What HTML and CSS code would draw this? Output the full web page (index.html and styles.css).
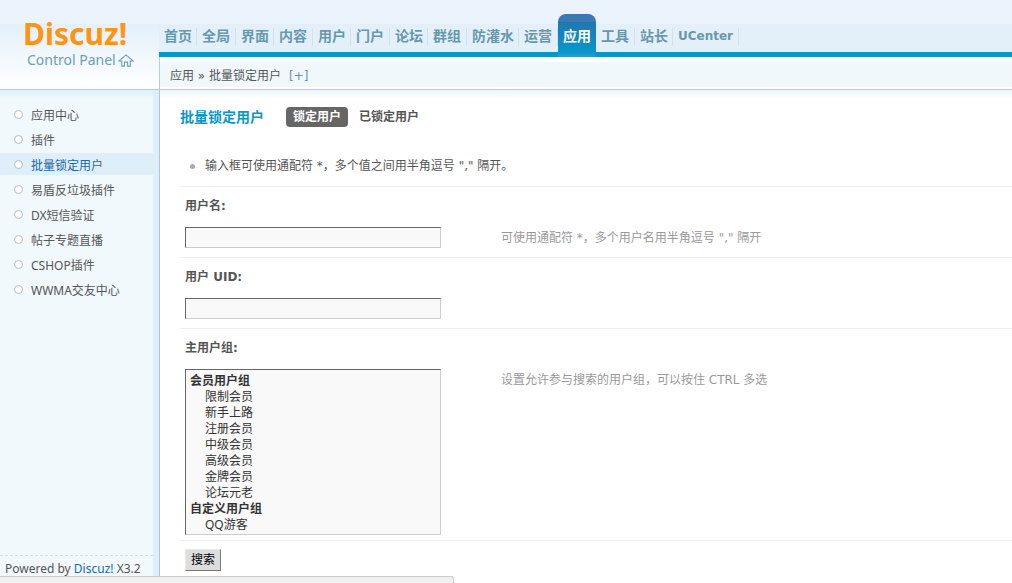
FILE: index.html
```html
<!DOCTYPE html>
<html lang="zh-CN">
<head>
<meta charset="utf-8">
<meta name="viewport" content="width=device-width, initial-scale=1">
<title>Discuz! Control Panel</title>
<link rel="stylesheet" href="styles.css">
</head>
<body>
<div class="page">
  <header class="header">
    <div class="brand">
      <div class="logo">Discuz!</div>
      <a class="home" href="#">Control Panel<svg class="home-icon" viewBox="0 0 15 12" aria-hidden="true"><path d="M.8 6.500 7.500.8 14.200 6.500H11.500V11.300H9V7.500H6V11.300H3.500V6.500Z"/></svg></a>
    </div>
    <div class="top">
      <nav class="nav">
        <a href="#">首页</a><a href="#">全局</a><a href="#">界面</a><a href="#">内容</a><a href="#">用户</a><a href="#">门户</a><a href="#">论坛</a><a href="#">群组</a><a href="#">防灌水</a><a href="#">运营</a><a class="current" href="#">应用</a><a href="#">工具</a><a href="#">站长</a><a class="latin" href="#">UCenter</a>
      </nav>
      <div class="crumbs"><span>应用 » 批量锁定用户</span><a href="#">[+]</a></div>
    </div>
  </header>
  <aside class="side">
    <ul class="menu">
      <li><a href="#">应用中心</a></li>
      <li><a href="#">插件</a></li>
      <li class="on"><a href="#">批量锁定用户</a></li>
      <li><a href="#">易盾反垃圾插件</a></li>
      <li><a href="#">DX短信验证</a></li>
      <li><a href="#">帖子专题直播</a></li>
      <li><a href="#">CSHOP插件</a></li>
      <li><a href="#">WWMA交友中心</a></li>
    </ul>
    <p class="powered">Powered by <a href="#">Discuz!</a> X3.2</p>
  </aside>
  <main class="main">
    <div class="title">
      <h1>批量锁定用户</h1>
      <a class="tab active" href="#">锁定用户</a>
      <a class="tab" href="#">已锁定用户</a>
    </div>
    <ul class="tips"><li>输入框可使用通配符 *，多个值之间用半角逗号 "," 隔开。</li></ul>
    <form class="form">
      <div class="row">
        <label for="username">用户名:</label>
        <div class="field"><input id="username" class="text" type="text"><p class="hint">可使用通配符 *，多个用户名用半角逗号 "," 隔开</p></div>
      </div>
      <div class="row">
        <label for="uid">用户 UID:</label>
        <div class="field"><input id="uid" class="text" type="text"></div>
      </div>
      <div class="row">
        <label for="groups">主用户组:</label>
        <div class="field">
          <select id="groups" class="list" multiple size="10">
            <optgroup label="会员用户组">
              <option>限制会员</option>
              <option>新手上路</option>
              <option>注册会员</option>
              <option>中级会员</option>
              <option>高级会员</option>
              <option>金牌会员</option>
              <option>论坛元老</option>
            </optgroup>
            <optgroup label="自定义用户组">
              <option>QQ游客</option>
            </optgroup>
          </select>
          <p class="hint">设置允许参与搜索的用户组，可以按住 CTRL 多选</p>
        </div>
      </div>
      <div class="actions"><button class="search" type="button">搜索</button></div>
    </form>
  </main>
</div>
<div class="status"></div>
</body>
</html>
```
FILE: styles.css
```css
* { box-sizing: border-box; }
body {
  margin: 0;
  background: #fff;
  color: #555;
  font: 12px/16px "Noto Sans", "Noto Sans CJK SC", sans-serif;
}
a { color: inherit; text-decoration: none; }
ul, p, h1 { margin: 0; padding: 0; list-style: none; }

.page {
  display: grid;
  grid-template-columns: 160px minmax(0, 1fr);
  grid-template-rows: auto 1fr;
  min-height: 100vh;
}
.header {
  grid-column: 1 / -1;
  display: grid;
  grid-template-columns: 159px minmax(0, 1fr);
  height: 90px;
  border-bottom: 1px solid #b5cfd9;
  background: linear-gradient(#ebf4fc 24px, #e3f0fa 24px, #fff 87px);
}
.brand { padding: 16px 0 0 23px; }
.logo {
  color: #ff9414;
  font: bold 30px/36px "Noto Sans", sans-serif;
}
.home {
  display: flex;
  align-items: center;
  gap: 2px;
  padding-left: 4px;
  color: #6d9eb5;
  font-size: 14px;
  line-height: 16px;
}
.home-icon { width: 16px; height: 13px; fill: none; stroke: currentColor; }

.top { background: linear-gradient(#ebf4fc 24px, #e3f0f9 24px); }
.nav {
  display: flex;
  align-items: flex-end;
  height: 57px;
  border-bottom: 5px solid #0997c9;
}
.nav a {
  padding: 0 5px;
  color: #6798ac;
  font-size: 14px;
  font-weight: bold;
  line-height: 32px;
  white-space: nowrap;
  background: linear-gradient(#d3e2e8, #d3e2e8) right 8px / 1px 18px no-repeat;
}
.nav a:nth-child(even) { padding-right: 6px; }
.nav .latin { font: bold 12px/32px "DejaVu Sans", sans-serif; }
.nav .current {
  height: 43px;
  margin-bottom: -5px;
  padding-top: 6px;
  border-radius: 8px 8px 0 0;
  background: linear-gradient(#3c79b1 8px, #1f77b2 8px, #0997c9 38px, #2b9dca);
  color: #fff;
}
.crumbs {
  display: flex;
  align-items: center;
  gap: 8px;
  height: 32px;
  padding: 5px 10px 0;
  border-left: 1px solid #b5cfd9;
  background: linear-gradient(#fff 5px, #f0f8fc 5px, #f0f8fc 30px, #fff 30px);
  font-family: "DejaVu Sans", "Noto Sans CJK SC", sans-serif;
}
.crumbs a { color: #6f8fae; }

.side {
  display: flex;
  flex-direction: column;
  justify-content: space-between;
  border-right: 1px solid #a6cadd;
  background:
    linear-gradient(#deeffa, rgba(222, 239, 250, 0) 8px),
    linear-gradient(90deg, #f1f9fd 153px, #deeffa 153px);
}
.menu { padding-top: 13px; }
.menu li {
  height: 22px;
  margin-bottom: 3px;
  margin-right: 6px;
  padding: 2px 0 0 14px;
  line-height: 22px;
}
.menu li.on { background: #deeffa; color: #2366a8; }
.menu a { display: flex; gap: 8px; }
.menu a::before {
  content: "";
  width: 7px;
  height: 7px;
  margin-top: 5px;
  border: 1px solid #b4bec3;
  border-radius: 50%;
  background: #fff;
}
.powered {
  margin-right: 6px;
  padding: 5px 5px 6px;
  border-top: 1px dashed #cfe0ea;
}
.powered a { color: #2366a8; }

.main {
  padding: 16px 0 12px 20px;
  background: linear-gradient(#edf4fa, #fff 8px);
  font-family: "DejaVu Sans", "Noto Sans CJK SC", sans-serif;
}
.title { display: flex; align-items: center; height: 22px; }
.title h1 { margin-right: 22px; color: #0997c9; font-size: 14px; line-height: 22px; }
.tab {
  margin-right: 4px;
  padding: 0 7px;
  border-radius: 4px;
  font-weight: bold;
  line-height: 20px;
}
.tab.active { background: #666; color: #fff; }
.tips { padding: 30px 10px 12px; }
.tips li { display: flex; gap: 10px; align-items: center; }
.tips li::before { content: ""; width: 5px; height: 5px; border-radius: 50%; background: #aaa; }
.row { padding: 11px 5px 9px; border-top: 1px solid #f0f0f0; }
.row:nth-child(3) { padding-bottom: 5px; }
.row label { display: block; margin-bottom: 13px; font-weight: bold; }
.field { display: flex; align-items: flex-start; gap: 60px; }
.hint { padding-top: 3px; color: #999; }
.text, .list {
  width: 256px;
  margin: 0;
  border: 1px solid #ccc;
  border-color: #666 #ccc #ccc #666;
  border-radius: 0;
  background: #f9f9f9;
  font: inherit;
}
.text { height: 21px; }
.list { height: 166px; padding: 1px 2px; color: #333; overflow: hidden; }
.list optgroup { font: bold 12px/16px "Noto Sans", "Noto Sans CJK SC", sans-serif; }
.list option {
  height: 16px;
  min-height: 16px;
  padding: 0 2px 0 17px;
  font-weight: normal;
  line-height: 16px;
}
.list option:first-of-type { margin-top: -3px; }
.actions { padding: 8px 5px 0; border-top: 1px solid #f0f0f0; }
.search {
  display: block;
  padding: 2px 5px;
  border: 1px solid #ddd;
  border-color: #e8e8e8 #777 #777 #e8e8e8;
  background: #ddd;
  color: #000;
  font: inherit;
}
.status {
  position: fixed;
  bottom: 0;
  left: 0;
  width: 454px;
  height: 7px;
  border: 1px solid #ccc;
  border-width: 1px 1px 0 0;
  border-radius: 0 3px 0 0;
  background: #f0f0f0;
}
```
